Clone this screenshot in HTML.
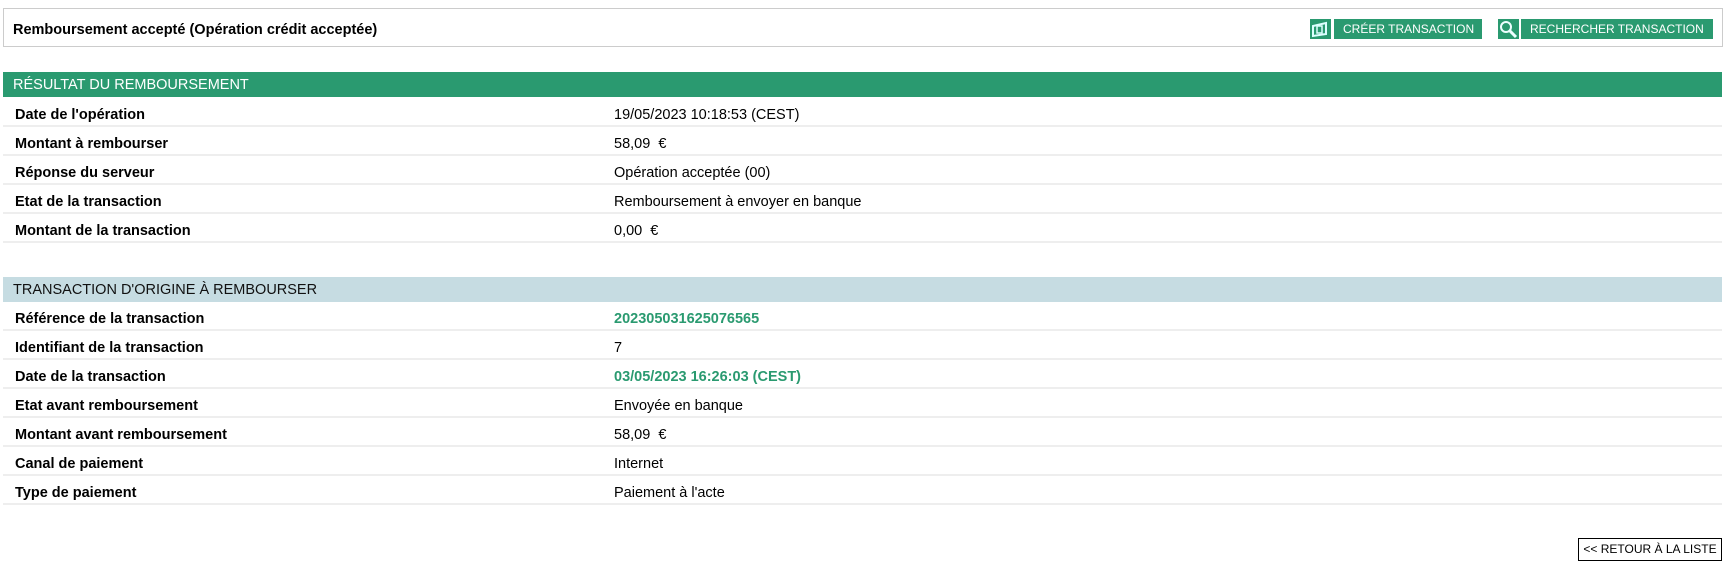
<!DOCTYPE html>
<html><head><meta charset="utf-8"><style>
*{box-sizing:border-box;margin:0;padding:0;white-space:nowrap}
body{width:1733px;height:567px;background:#fff;font-family:"Liberation Sans",Arial,sans-serif;position:relative;overflow:hidden;color:#000}
.hdr{position:absolute;left:3px;top:8px;width:1720px;height:39px;border:1px solid #ccc}
.hdr .t{position:absolute;left:9px;top:13px;font-weight:bold;font-size:14.5px}
.ic{position:absolute;top:19px;width:21px;height:20px;background:#2a9a70}
.btn{position:absolute;top:19px;height:20px;background:#2a9a70;color:#fff;font-size:12px;line-height:20px;padding-left:9px;overflow:hidden}
.sec{position:absolute;left:3px;width:1719px;height:25px;font-size:14.5px;line-height:26px;padding-left:10px}
.row{position:absolute;left:3px;width:1719px;height:29px;border-bottom:2px solid #eee;font-size:14.5px}
.row .l{position:absolute;left:12px;top:9px;font-weight:bold}
.row .v{position:absolute;left:611px;top:9px}
.g{color:#2a9a70;font-weight:bold}
.ret{position:absolute;left:1578px;top:538px;width:144px;height:23px;border:1px solid #000;font-size:12px;line-height:21px;text-align:center}
</style></head><body>
<div class="hdr"><div class="t">Remboursement accepté (Opération crédit acceptée)</div></div>
<div class="ic" style="left:1310px"><svg width="21" height="20"><path d="M3 7 L16 4 L16 15 L3 17 Z" fill="none" stroke="#dff" stroke-width="2"/><rect x="7" y="7" width="5" height="7" fill="none" stroke="#dff" stroke-width="1.5"/></svg></div>
<div class="btn" style="left:1334px;width:148px">CRÉER TRANSACTION</div>
<div class="ic" style="left:1498px"><svg width="21" height="20"><circle cx="8" cy="8" r="5" fill="none" stroke="#eff" stroke-width="2"/><line x1="12" y1="12" x2="18" y2="18" stroke="#eff" stroke-width="3"/></svg></div>
<div class="btn" style="left:1521px;width:192px">RECHERCHER TRANSACTION</div>

<div class="sec" style="top:72px;background:#2a9a70;color:#fff">RÉSULTAT DU REMBOURSEMENT</div>
<div class="row" style="top:98px"><span class="l">Date de l'opération</span><span class="v">19/05/2023 10:18:53 (CEST)</span></div>
<div class="row" style="top:127px"><span class="l">Montant à rembourser</span><span class="v">58,09 &nbsp;€</span></div>
<div class="row" style="top:156px"><span class="l">Réponse du serveur</span><span class="v">Opération acceptée (00)</span></div>
<div class="row" style="top:185px"><span class="l">Etat de la transaction</span><span class="v">Remboursement à envoyer en banque</span></div>
<div class="row" style="top:214px"><span class="l">Montant de la transaction</span><span class="v">0,00 &nbsp;€</span></div>

<div class="sec" style="top:277px;background:#c6dce2;color:#111">TRANSACTION D'ORIGINE À REMBOURSER</div>
<div class="row" style="top:302px"><span class="l">Référence de la transaction</span><span class="v g">202305031625076565</span></div>
<div class="row" style="top:331px"><span class="l">Identifiant de la transaction</span><span class="v">7</span></div>
<div class="row" style="top:360px"><span class="l">Date de la transaction</span><span class="v g">03/05/2023 16:26:03 (CEST)</span></div>
<div class="row" style="top:389px"><span class="l">Etat avant remboursement</span><span class="v">Envoyée en banque</span></div>
<div class="row" style="top:418px"><span class="l">Montant avant remboursement</span><span class="v">58,09 &nbsp;€</span></div>
<div class="row" style="top:447px"><span class="l">Canal de paiement</span><span class="v">Internet</span></div>
<div class="row" style="top:476px"><span class="l">Type de paiement</span><span class="v">Paiement à l'acte</span></div>

<div class="ret">&lt;&lt; RETOUR À LA LISTE</div>
</body></html>
